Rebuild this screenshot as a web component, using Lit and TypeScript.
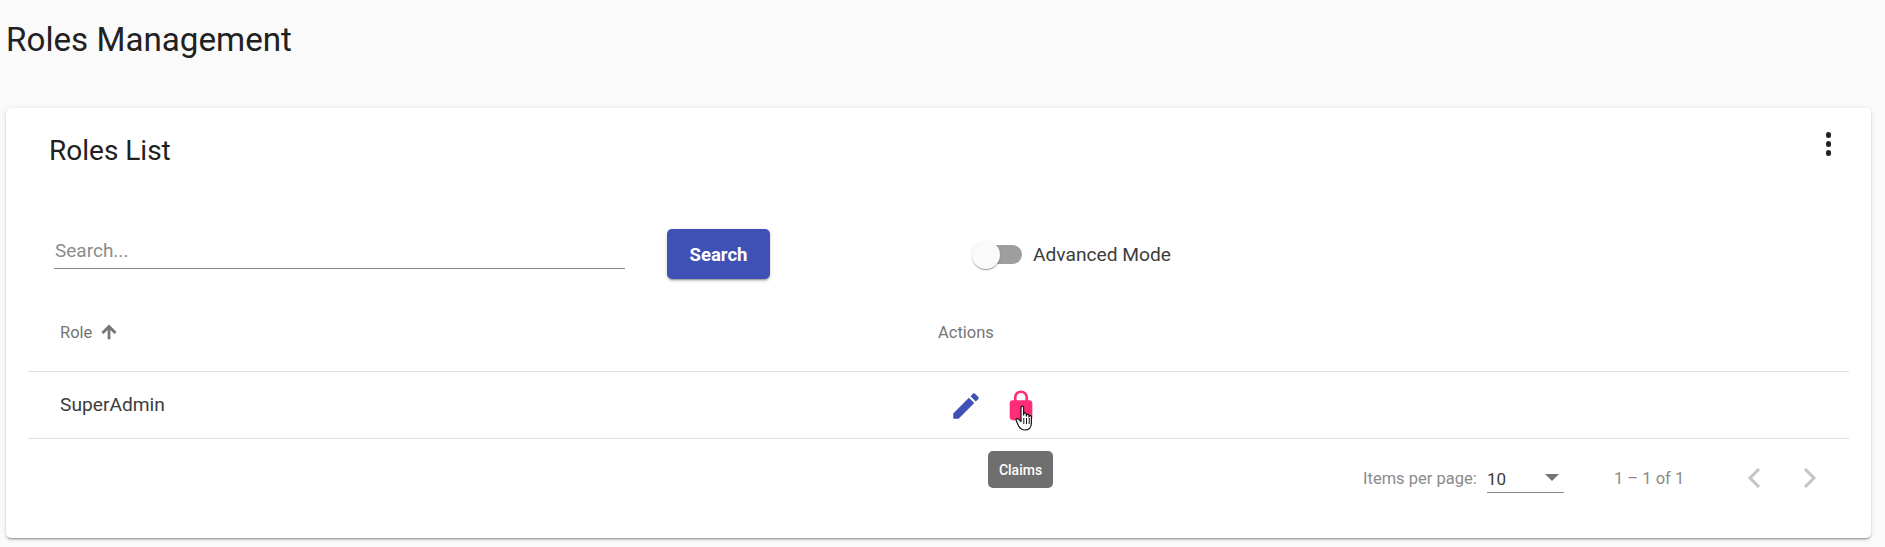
import { LitElement, html, css } from 'lit';
import { customElement } from 'lit/decorators.js';

@customElement('app-root')
export class AppRoot extends LitElement {
  static styles = css`
    :host {
      display: block;
      width: 100%;
      height: 547px;
      overflow: hidden;
      background: #fafafa;
      color: #212121;
      font-family: Roboto, "Liberation Sans", sans-serif;
    }
    .page-title {
      margin: 0;
      padding: 20px 0 0 6px;
      height: 108px;
      box-sizing: border-box;
      font-size: 33.2px;
      line-height: 40px;
      font-weight: 400;
    }
    .card {
      margin: 0 14px 0 6px;
      height: 430px;
      box-sizing: border-box;
      padding: 0 22px;
      background: #fff;
      border-radius: 5px;
      box-shadow: 0 3px 1px -2px rgba(0, 0, 0, .2), 0 2px 2px 0 rgba(0, 0, 0, .14), 0 1px 5px 0 rgba(0, 0, 0, .12);
    }
    .card-head {
      display: flex;
      justify-content: space-between;
      height: 84px;
    }
    .card-title {
      margin: 0;
      padding: 27px 0 0 21px;
      font-size: 28px;
      line-height: 32px;
      font-weight: 400;
    }
    .dots {
      display: flex;
      flex-direction: column;
      gap: 3.5px;
      padding: 24px 18px 0 0;
    }
    .dots span {
      width: 5.5px;
      height: 5.5px;
      border-radius: 50%;
      background: #212121;
    }
    .toolbar {
      display: flex;
      align-items: center;
      height: 50px;
      margin-top: 37px;
      padding-left: 26px;
    }
    .search {
      width: 571px;
      height: 40px;
      box-sizing: border-box;
      padding: 0 0 6px 1px;
      display: flex;
      align-items: flex-end;
      border-bottom: 1px solid #8a8a8a;
      color: #8c8c8c;
      font-size: 19px;
      line-height: 22px;
      align-self: flex-start;
    }
    .btn {
      width: 103px;
      height: 50px;
      margin-left: 42px;
      padding: 1px 0 0;
      border: 0;
      border-radius: 5px;
      background: #3f51b5;
      color: #fff;
      font: 700 18.5px Roboto, sans-serif;
      box-shadow: 0 3px 1px -2px rgba(0, 0, 0, .2), 0 2px 2px 0 rgba(0, 0, 0, .14), 0 1px 5px 0 rgba(0, 0, 0, .12);
    }
    .toggle {
      display: flex;
      align-items: center;
      margin-left: 202px;
      font-size: 19.2px;
      color: #3c3c3c;
    }
    .track {
      position: relative;
      width: 45px;
      height: 19px;
      margin: 0 11px 0 5px;
      border-radius: 10px;
      background: #9e9e9e;
    }
    .knob {
      position: absolute;
      left: -5px;
      top: -4px;
      width: 28px;
      height: 28px;
      border-radius: 50%;
      background: #fafafa;
      box-shadow: 0 2px 1px -1px rgba(0, 0, 0, .2), 0 1px 1px 0 rgba(0, 0, 0, .14), 0 1px 3px 0 rgba(0, 0, 0, .12);
    }
    .row {
      display: grid;
      grid-template-columns: 878px 1fr;
      align-items: center;
      padding-left: 32px;
      border-bottom: 1px solid #e0e0e0;
    }
    .row.head {
      height: 93px;
      box-sizing: border-box;
      padding: 15px 0 1px 32px;
      color: #757575;
      font-size: 16.5px;
      font-weight: 400;
    }
    .row.body {
      height: 67px;
      box-sizing: border-box;
      font-size: 19.2px;
      color: #3c3c3c;
    }
    .name { padding-bottom: 2px; }
    .sort {
      display: flex;
      align-items: center;
      gap: 7px;
    }
    .sort svg { width: 20px; height: 20px; fill: #757575; stroke: #757575; stroke-width: 1.4; }
    .actions {
      position: relative;
      display: flex;
      align-items: center;
      gap: 21px;
      padding: 1px 0 0 11px;
      box-sizing: border-box;
      height: 66px;
    }
    .actions svg { display: block; width: 34px; height: 34px; }
    .edit { fill: #3f51b5; }
    .lock { fill: #ff2d78; }
    .actions .hand {
      position: absolute;
      left: 77px;
      top: 33px;
      width: 20px;
      height: 26px;
    }
    .tooltip {
      position: absolute;
      left: 50px;
      top: 79px;
      width: 65px;
      height: 37px;
      display: flex;
      align-items: center;
      justify-content: center;
      border-radius: 5px;
      background: #6f6f6f;
      color: #fff;
      font-size: 14px;
      font-weight: 500;
    }
    .pager {
      display: flex;
      align-items: center;
      height: 78px;
      padding-left: 1335px;
      color: #8a8a8a;
      font-size: 16.5px;
    }
    .pager > * { flex: none; }
    .per-page { width: 124px; white-space: nowrap; }
    .select {
      position: relative;
      width: 77px;
      height: 30px;
      box-sizing: border-box;
      padding-top: 5px;
      border-bottom: 1px solid #8a8a8a;
      color: #3c3c3c;
      font-size: 17px;
      line-height: 22px;
      align-self: flex-start;
      margin-top: 24px;
    }
    .caret {
      position: absolute;
      right: 5px;
      top: 11px;
      width: 0;
      height: 0;
      border-left: 7px solid transparent;
      border-right: 7px solid transparent;
      border-top: 7px solid #757575;
    }
    .range { margin-left: 50px; width: 125px; white-space: nowrap; }
    .nav { display: block; width: 30px; height: 30px; fill: none; stroke: #c4c4c4; stroke-width: 3; }
    .nav + .nav { margin-left: 26px; }
  `;

  render() {
    return html`
      <h1 class="page-title">Roles Management</h1>
      <section class="card">
        <div class="card-head">
          <h2 class="card-title">Roles List</h2>
          <div class="dots"><span></span><span></span><span></span></div>
        </div>
        <div class="toolbar">
          <div class="search">Search...</div>
          <button class="btn">Search</button>
          <div class="toggle">
            <div class="track"><div class="knob"></div></div>
            Advanced Mode
          </div>
        </div>
        <div class="row head">
          <div class="sort">
            Role
            <svg viewBox="0 0 24 24"><path d="M4 12l1.41 1.41L11 7.83V20h2V7.83l5.58 5.59L20 12l-8-8-8 8z"></path></svg>
          </div>
          <div>Actions</div>
        </div>
        <div class="row body">
          <div class="name">SuperAdmin</div>
          <div class="actions">
            <svg class="edit" viewBox="0 0 24 24"><path d="M3 17.25V21h3.75L17.81 9.94l-3.75-3.75L3 17.25zM20.71 7.04c.39-.39.39-1.02 0-1.41l-2.34-2.34c-.39-.39-1.02-.39-1.41 0l-1.83 1.83 3.75 3.75 1.83-1.83z"></path></svg>
            <svg class="lock" viewBox="0 0 24 24"><path d="M18 8h-1V6c0-2.76-2.24-5-5-5S7 3.24 7 6v2H6c-1.1 0-2 .9-2 2v10c0 1.1.9 2 2 2h12c1.1 0 2-.9 2-2V10c0-1.1-.9-2-2-2zm-2.9 0H8.9V6c0-1.71 1.39-3.1 3.1-3.1 1.71 0 3.1 1.39 3.1 3.1v2z"></path></svg>
            <svg class="hand" viewBox="0 0 20 26">
              <path d="M6 2.2c0-1.5 2.6-1.5 2.6 0V10l.3-1.4c.3-1.3 2.4-1.1 2.4.3V11l.3-1c.4-1.2 2.3-1 2.3.4V12l.3-.8c.5-1 2.2-.8 2.2.6V18c0 4-2.4 7-6.4 7-3.3 0-5-1.5-6.4-4L1.2 15.6c-.7-1.5 1.2-2.6 2.4-1.4L6 16.6z" fill="#fff" stroke="#111" stroke-width="1.2" stroke-linejoin="round"></path>
              <path d="M8.8 13v6M11.5 13v6M14.2 13v6" stroke="#111" stroke-width="1" fill="none"></path>
            </svg>
            <div class="tooltip">Claims</div>
          </div>
        </div>
        <div class="pager">
          <span class="per-page">Items per page:</span>
          <div class="select">10<span class="caret"></span></div>
          <span class="range">1 – 1 of 1</span>
          <svg class="nav" viewBox="0 0 30 30"><path d="M20 6l-9 9 9 9"></path></svg>
          <svg class="nav" viewBox="0 0 30 30"><path d="M10 6l9 9-9 9"></path></svg>
        </div>
      </section>
    `;
  }
}
